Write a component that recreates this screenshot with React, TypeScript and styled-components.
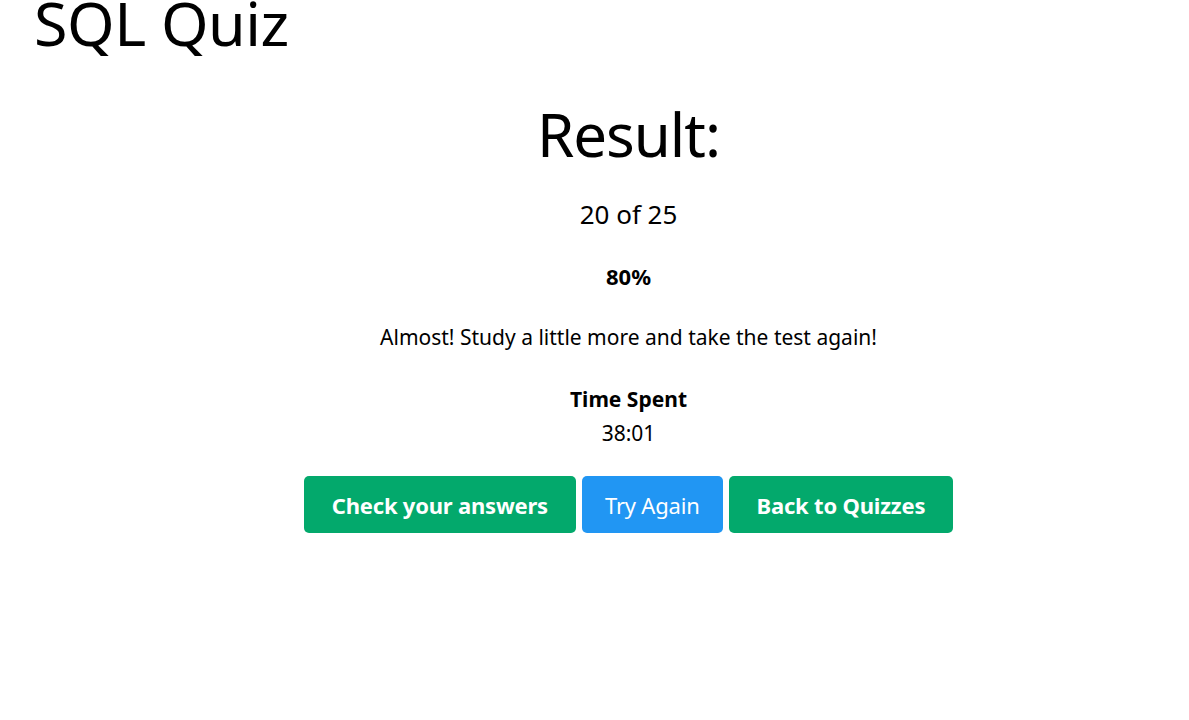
import React from "react";
import styled, { createGlobalStyle } from "styled-components";

const Global = createGlobalStyle`
  html, body { margin: 0; padding: 0; background: #fff; }
  body { font-family: "Noto Sans", "Open Sans", sans-serif; color: #000; }
`;

const Page = styled.div`
  display: flex;
  flex-direction: column;
`;

const Header = styled.h1`
  margin: 0 0 0 34px;
  font-size: 61px;
  font-weight: 400;
  line-height: 46px;
  letter-spacing: -0.5px;
`;

const Main = styled.main`
  display: flex;
  flex-direction: column;
  align-items: center;
  margin-left: 68px;
  text-align: center;
`;

const Title = styled.h2`
  margin: 48px 0 0;
  font-size: 60px;
  font-weight: 400;
  line-height: 80px;
  letter-spacing: -1px;
`;

const Score = styled.div`
  margin-top: 24px;
  font-size: 26px;
  line-height: 32px;
`;

const Line = styled.p<{ $bold?: boolean; $gap: number; $size: number }>`
  margin: ${(p) => p.$gap}px 0 0;
  font-size: ${(p) => p.$size}px;
  line-height: 28px;
  font-weight: ${(p) => (p.$bold ? 700 : 400)};
`;

const Actions = styled.div`
  display: flex;
  gap: 6px;
  margin-top: 29px;
`;

const Button = styled.button<{ $variant: "green" | "blue" }>`
  height: 57px;
  padding: 0 ${(p) => (p.$variant === "blue" ? 23 : 28)}px;
  border: none;
  border-radius: 5px;
  background: ${(p) => (p.$variant === "blue" ? "#2196f3" : "#03a96c")};
  color: #fff;
  font-family: "Noto Sans", "Open Sans", sans-serif;
  font-size: 22px;
  font-weight: ${(p) => (p.$variant === "blue" ? 400 : 700)};
  letter-spacing: -0.2px;
  cursor: pointer;
`;

export default function App() {
  return (
    <Page>
      <Global />
      <Header>SQL Quiz</Header>
      <Main>
        <Title>Result:</Title>
        <Score>20 of 25</Score>
        <Line $bold $gap={32} $size={22}>80%</Line>
        <Line $gap={33} $size={21}>Almost! Study a little more and take the test again!</Line>
        <Line $bold $gap={34} $size={21}>Time Spent</Line>
        <Line $gap={6} $size={21}>38:01</Line>
        <Actions>
          <Button $variant="green">Check your answers</Button>
          <Button $variant="blue">Try Again</Button>
          <Button $variant="green">Back to Quizzes</Button>
        </Actions>
      </Main>
    </Page>
  );
}
